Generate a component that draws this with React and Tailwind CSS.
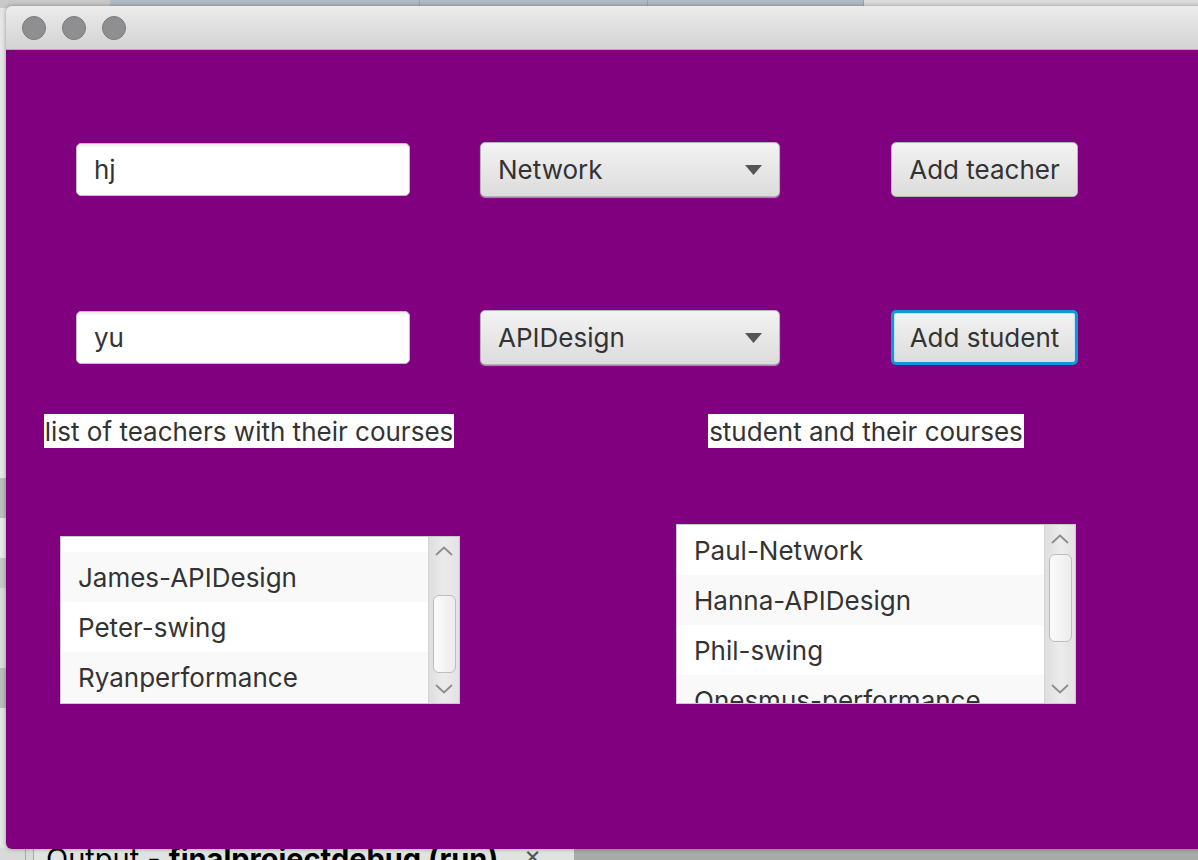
import React from "react";

const font = { fontFamily: "Inter, 'Open Sans', sans-serif" };

function Chevron({ up }) {
  return (
    <svg width="18" height="10" viewBox="0 0 18 10">
      <path
        d={up ? "M1 9 L9 1.5 L17 9" : "M1 1 L9 8.5 L17 1"}
        fill="none"
        stroke="#8c8c8c"
        strokeWidth="1.8"
      />
    </svg>
  );
}

function TextField({ value }) {
  return (
    <div className="w-[334px] h-[53px] bg-white border border-[#bdbdbd] rounded-[5px] shadow-[inset_0_2px_2px_rgba(0,0,0,0.08)] flex items-center pl-[17px] text-[26px] text-[#333]">
      {value}
    </div>
  );
}

function Combo({ value }) {
  return (
    <div className="w-[300px] h-[55px] rounded-[5px] border border-[#b3b3b3] bg-gradient-to-b from-[#f3f3f3] to-[#dcdcdc] shadow-[0_1px_1px_rgba(255,255,255,0.5)] flex items-center justify-between pl-[17px] pr-[17px] text-[26px] text-[#333]">
      <span>{value}</span>
      <svg width="17" height="10" viewBox="0 0 17 10">
        <path d="M0 0 L17 0 L8.5 10 Z" fill="#555" />
      </svg>
    </div>
  );
}

function Button({ label, focused }) {
  return (
    <div
      className={
        "w-[187px] h-[55px] rounded-[5px] flex items-center justify-center text-[26px] text-[#333] bg-gradient-to-b from-[#f3f3f3] to-[#dcdcdc] " +
        (focused
          ? "border-[3px] border-[#0a9ad8] shadow-[inset_0_0_0_1px_#bfe4f3]"
          : "border border-[#b3b3b3]")
      }
    >
      {label}
    </div>
  );
}

function ListView({ rows, topGap, thumbTop, thumbHeight, height, width }) {
  return (
    <div
      className="border border-[#c9c9c9] bg-white flex overflow-hidden"
      style={{ width, height }}
    >
      <div className="flex-1 flex flex-col overflow-hidden">
        {topGap ? <div className="bg-white shrink-0" style={{ height: topGap }} /> : null}
        {rows.map((r, i) => (
          <div
            key={i}
            className={
              "h-[50px] shrink-0 flex items-center pl-[17px] text-[26px] text-[#333] whitespace-nowrap " +
              (r.alt ? "bg-[#f9f9f9]" : "bg-white")
            }
          >
            {r.text}
          </div>
        ))}
      </div>
      <div className="w-[31px] shrink-0 border-l border-[#d4d4d4] bg-gradient-to-r from-[#dedede] via-[#ececec] to-[#e2e2e2] flex flex-col items-center relative">
        <div className="h-[28px] flex items-center justify-center">
          <Chevron up />
        </div>
        <div className="flex-1" />
        <div className="h-[28px] flex items-center justify-center">
          <Chevron />
        </div>
        <div
          className="absolute left-[4px] right-[3px] rounded-[6px] border border-[#bdbdbd] bg-gradient-to-r from-[#fbfbfb] to-[#ececec]"
          style={{ top: thumbTop, height: thumbHeight }}
        />
      </div>
    </div>
  );
}

export default function App() {
  return (
    <div className="relative w-[1198px] h-[860px] overflow-hidden bg-[#d6d6d6]" style={font}>
      {/* background desktop: top tabs strip */}
      <div className="absolute left-0 top-0 w-full h-[8px] flex">
        <div className="w-[110px] bg-[#c9c9c9]" />
        <div className="w-[310px] bg-[#b1b9c3] border-r border-[#9aa2ac]" />
        <div className="w-[228px] bg-[#b1b9c3] border-r border-[#9aa2ac]" />
        <div className="w-[216px] bg-[#b1b9c3] border-r border-[#9aa2ac]" />
        <div className="flex-1 bg-[#dcdcdc]" />
      </div>
      {/* left strip */}
      <div className="absolute left-0 top-[8px] w-[6px] h-[852px] flex flex-col">
        <div className="h-[470px] bg-[#e6e6e6]" />
        <div className="h-[40px] bg-[#bdbdbd]" />
        <div className="h-[40px] bg-[#e9e9e9]" />
        <div className="h-[30px] bg-[#c7c7c7]" />
        <div className="h-[80px] bg-[#dadada]" />
        <div className="h-[40px] bg-[#bcbcbc]" />
        <div className="flex-1 bg-[#e4e4e4]" />
      </div>
      {/* bottom output strip */}
      <div className="absolute left-0 top-[848px] w-full h-[12px] bg-[#d9d9d9] overflow-hidden flex">
        <div className="w-[26px] border-r border-[#a8a8a8]" />
        <div className="w-[8px] border-r border-[#a8a8a8]" />
        <div className="relative w-[540px] bg-[#e2e2e2]">
          <div className="absolute left-[12px] top-[-4px] text-[29px] leading-none text-black whitespace-nowrap">
            Output - <span className="font-bold">finalprojectdebug (run)</span>
          </div>
          <div className="absolute left-[490px] top-[-6px] text-[26px] leading-none text-[#555]">×</div>
        </div>
        <div className="flex-1 bg-[#a9a9a9]" />
      </div>

      {/* window */}
      <div className="absolute left-[6px] top-[6px] w-[1200px] h-[843px] rounded-l-[6px] overflow-hidden flex flex-col shadow-[0_0_4px_rgba(0,0,0,0.35)]">
        <div className="h-[44px] shrink-0 bg-gradient-to-b from-[#ececec] to-[#d3d3d3] border-b border-[#afafaf] flex items-center pl-[16px] gap-[16px]">
          <div className="w-[24px] h-[24px] rounded-full bg-[#8f8e91] border border-[#7a797c]" />
          <div className="w-[24px] h-[24px] rounded-full bg-[#8f8e91] border border-[#7a797c]" />
          <div className="w-[24px] h-[24px] rounded-full bg-[#8f8e91] border border-[#7a797c]" />
        </div>
        <div className="flex-1 bg-[#800080] flex flex-col">
          {/* row 1 */}
          <div className="flex items-center mt-[92px] h-[55px]">
            <div className="ml-[70px]"><TextField value="hj" /></div>
            <div className="ml-[70px]"><Combo value="Network" /></div>
            <div className="ml-[111px]"><Button label="Add teacher" /></div>
          </div>
          {/* row 2 */}
          <div className="flex items-center mt-[113px] h-[55px]">
            <div className="ml-[70px]"><TextField value="yu" /></div>
            <div className="ml-[70px]"><Combo value="APIDesign" /></div>
            <div className="ml-[111px]"><Button label="Add student" focused /></div>
          </div>
          {/* labels */}
          <div className="flex mt-[49px]">
            <div className="ml-[38px] w-[410px] bg-white h-[34px] flex items-center justify-center text-[26px] text-[#333] whitespace-nowrap">
              list of teachers with their courses
            </div>
            <div className="ml-[254px] w-[316px] bg-white h-[34px] flex items-center justify-center text-[26px] text-[#333] whitespace-nowrap">
              student and their courses
            </div>
          </div>
          {/* lists */}
          <div className="flex items-end mt-[76px]">
            <div className="ml-[54px]">
              <ListView
                width={400}
                height={168}
                topGap={15}
                thumbTop={58}
                thumbHeight={78}
                rows={[
                  { text: "James-APIDesign", alt: true },
                  { text: "Peter-swing", alt: false },
                  { text: "Ryanperformance", alt: true },
                ]}
              />
            </div>
            <div className="ml-[216px]">
              <ListView
                width={400}
                height={180}
                topGap={0}
                thumbTop={29}
                thumbHeight={88}
                rows={[
                  { text: "Paul-Network", alt: false },
                  { text: "Hanna-APIDesign", alt: true },
                  { text: "Phil-swing", alt: false },
                  { text: "Onesmus-performance", alt: true },
                ]}
              />
            </div>
          </div>
        </div>
      </div>
    </div>
  );
}
